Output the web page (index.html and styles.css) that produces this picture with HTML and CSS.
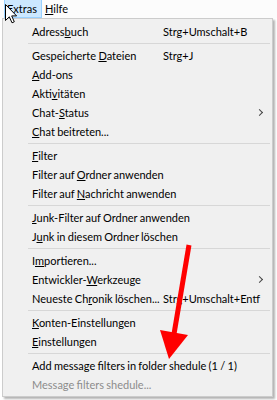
FILE: index.html
```html
<!DOCTYPE html>
<html lang="de">
<head>
    <meta charset="UTF-8">
    <title>Extras</title>
    <link rel="stylesheet" href="styles.css">
</head>
<body>
<div class="menubar">
    <span class="menubar__item menubar__item_open"><u>E</u>xtras</span>
    <span class="menubar__item"><u>H</u>ilfe</span>
</div>

<div class="menu">
    <div class="menu__item"><span class="menu__label">Adress<u>b</u>uch</span><span class="menu__key">Strg+Umschalt+B</span></div>
    <div class="menu__sep"></div>
    <div class="menu__item"><span class="menu__label">Gespeicherte <u>D</u>ateien</span><span class="menu__key">Strg+J</span></div>
    <div class="menu__item"><span class="menu__label"><u>A</u>dd-ons</span></div>
    <div class="menu__item"><span class="menu__label">Akti<u>v</u>itäten</span></div>
    <div class="menu__item"><span class="menu__label">Chat-<u>S</u>tatus</span><span class="menu__arrow"></span></div>
    <div class="menu__item"><span class="menu__label"><u>C</u>hat beitreten...</span></div>
    <div class="menu__sep"></div>
    <div class="menu__item"><span class="menu__label"><u>F</u>ilter</span></div>
    <div class="menu__item"><span class="menu__label">Filter auf <u>O</u>rdner anwenden</span></div>
    <div class="menu__item"><span class="menu__label">Filter auf <u>N</u>achricht anwenden</span></div>
    <div class="menu__sep"></div>
    <div class="menu__item"><span class="menu__label"><u>J</u>unk-Filter auf Ordner anwenden</span></div>
    <div class="menu__item"><span class="menu__label">J<u>u</u>nk in diesem Ordner löschen</span></div>
    <div class="menu__sep"></div>
    <div class="menu__item"><span class="menu__label">I<u>m</u>portieren...</span></div>
    <div class="menu__item"><span class="menu__label">Entwickler-<u>W</u>erkzeuge</span><span class="menu__arrow"></span></div>
    <div class="menu__item"><span class="menu__label">Neueste Ch<u>r</u>onik löschen...</span><span class="menu__key">Strg+Umschalt+Entf</span></div>
    <div class="menu__sep"></div>
    <div class="menu__item"><span class="menu__label"><u>K</u>onten-Einstellungen</span></div>
    <div class="menu__item"><span class="menu__label"><u>E</u>instellungen</span></div>
    <div class="menu__sep"></div>
    <div class="menu__item"><span class="menu__label">Add message filters in folder shedule (1 / 1)</span></div>
    <div class="menu__item menu__item_disabled"><span class="menu__label">Message filters shedule...</span></div>
</div>

<!-- mouse pointer over the open menu -->
<svg class="pointer" width="13" height="20" viewBox="0 0 13 20">
    <path d="M0.5 0.5 L0.5 16.5 L4.3 12.8 L7 18.8 L9.3 17.8 L6.7 11.9 L11.6 11.9 Z"
          fill="#fff" stroke="#000" stroke-width="1" stroke-linejoin="round"/>
</svg>

<!-- red annotation arrow -->
<svg class="annotation" width="277" height="400" viewBox="0 0 277 400">
    <line x1="189" y1="245" x2="174" y2="334" stroke="#f00" stroke-width="5"/>
    <polygon points="160,330 188,335 169,359" fill="#f00"/>
</svg>
</body>
</html>
```

FILE: styles.css
```css
body {
    margin: 0;
    width: 277px;
    height: 400px;
    overflow: hidden;
    background: #fff;
    font-family: Lato, "Noto Sans", sans-serif;
    font-size: 11px;
    word-spacing: -0.5px;
    color: #000;
    position: relative;
}
u {
    text-decoration: underline;
    text-underline-offset: 1px;
}
.menubar {
    height: 18px;
    display: flex;
    align-items: stretch;
    padding-left: 4px;
    background: #fcfcfc;
}
.menubar__item {
    display: flex;
    align-items: center;
    padding: 0 6px 0 2px;
    border: 1px solid transparent;
    border-top: none;
}
.menubar__item_open {
    background: #cce8ff;
    border-color: #99d1ff;
    padding: 0 4px 0 2px;
}
.menu {
    margin-left: 2px;
    width: 269px;
    padding: 3px 0 2px;
    background: #f0f0f0;
    border: 1px solid #cccccc;
    box-shadow: 2px 2px 2px rgba(0, 0, 0, 0.3);
}
.menu__item {
    height: 19px;
    display: flex;
    align-items: center;
    padding: 0 7px 0 29px;
    white-space: nowrap;
}
.menu__label {
    flex: 0 0 131px;
}
.menu__key {
    flex: 1;
}
.menu__arrow {
    margin-left: auto;
    width: 4px;
    height: 4px;
    border-top: 1px solid #444;
    border-right: 1px solid #444;
    transform: rotate(45deg);
    margin-right: 3px;
}
.menu__item_disabled {
    color: #8c8c8c;
}
.menu__sep {
    height: 1px;
    margin: 2px 2px 2px 25px;
    background: #d7d7d7;
}
.pointer {
    position: absolute;
    left: 5px;
    top: 4px;
}
.annotation {
    position: absolute;
    left: 0;
    top: 0;
}
```
